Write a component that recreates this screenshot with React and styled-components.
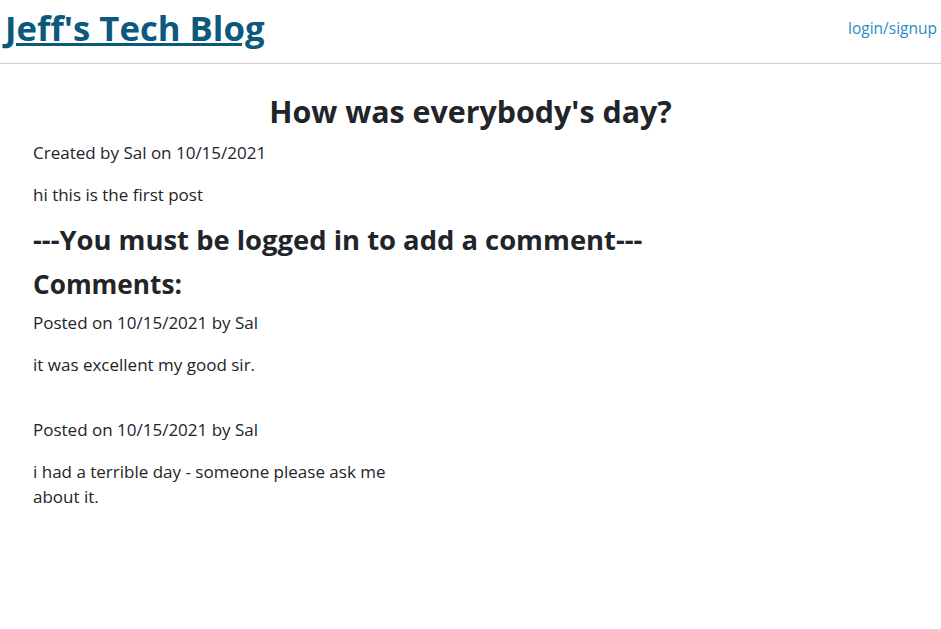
import React from "react";
import styled, { createGlobalStyle } from "styled-components";

const Global = createGlobalStyle`
  html, body { margin: 0; padding: 0; background: #fff; }
  body {
    font-family: "Open Sans", "Noto Sans", sans-serif;
    font-size: 17px;
    line-height: 1.5;
    color: #212529;
  }
  * { box-sizing: border-box; }
`;

const Header = styled.header`
  display: flex;
  justify-content: space-between;
  align-items: center;
  height: 64px;
  padding: 0 4px 0 5px;
  border-bottom: 1px solid #d0d0d0;
`;

const BrandTitle = styled.h1`
  margin: 0 0 7px;
  font-size: 34.7px;
  font-weight: 700;
  line-height: 1.2;
  a { color: #0b5a7e; text-decoration: underline; }
`;

const NavLink = styled.a`
  color: #2a8bc4;
  font-size: 15.5px;
  text-decoration: none;
  margin-bottom: 6px;
`;

const Main = styled.main`
  padding: 0 33px;
`;

const PostTitle = styled.h2`
  text-align: center;
  margin: 30px 0 10px;
  font-size: 30.4px;
  font-weight: 700;
  line-height: 36px;
`;

const Text = styled.p`
  margin: 0 0 ${(p) => (p.$mb ?? 17)}px;
  font-size: 17px;
  line-height: 25px;
`;

const Heading = styled.h3`
  margin: ${(p) => p.$mt || 0}px 0 ${(p) => p.$mb || 8}px;
  font-size: ${(p) => p.$size || 27}px;
  font-weight: 700;
  line-height: 32px;
`;

const CommentList = styled.section`
  display: flex;
  flex-direction: column;
  gap: 40px;
`;

const Comment = styled.article`
  width: ${(p) => p.$w}px;
`;

const comments = [
  { date: "10/15/2021", user: "Sal", text: "it was excellent my good sir." },
  { date: "10/15/2021", user: "Sal", text: "i had a terrible day - someone please ask me about it." },
];

export default function App() {
  return (
    <>
      <Global />
      <Header>
        <BrandTitle><a href="#">Jeff's Tech Blog</a></BrandTitle>
        <NavLink href="#">login/signup</NavLink>
      </Header>
      <Main>
        <PostTitle>How was everybody's day?</PostTitle>
        <Text>Created by Sal on 10/15/2021</Text>
        <Text>hi this is the first post</Text>
        <Heading $mt={7} $mb={12} $size={27.4}>---You must be logged in to add a comment---</Heading>
        <Heading $mb={10} $size={26.2}>Comments:</Heading>
        <CommentList>
          {comments.map((c, i) => (
            <Comment key={i} $w={370}>
              <Text>Posted on {c.date} by {c.user}</Text>
              <Text $mb={0}>{c.text}</Text>
            </Comment>
          ))}
        </CommentList>
      </Main>
    </>
  );
}
